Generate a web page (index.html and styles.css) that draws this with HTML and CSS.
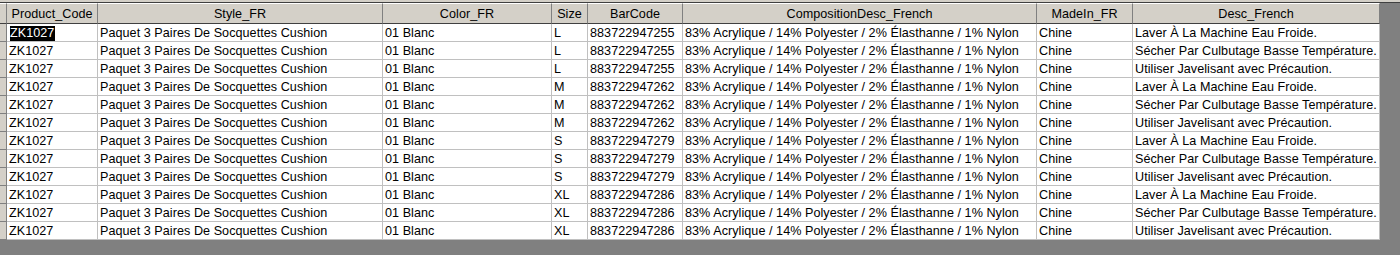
FILE: index.html
```html
<!DOCTYPE html>
<html>
<head>
<meta charset="utf-8">
<link rel="stylesheet" href="styles.css">
</head>
<body>
<div class="strip"></div>
<div class="area">
  <div class="sheet" id="sheet">
    <div class="hd sel"></div>
    <div class="hd">Product_Code</div>
    <div class="hd">Style_FR</div>
    <div class="hd">Color_FR</div>
    <div class="hd">Size</div>
    <div class="hd">BarCode</div>
    <div class="hd">CompositionDesc_French</div>
    <div class="hd">MadeIn_FR</div>
    <div class="hd">Desc_French</div>

    <div class="rs cur"></div><div class="c"><span class="hl">ZK1027</span></div><div class="c">Paquet 3 Paires De Socquettes Cushion</div><div class="c">01 Blanc</div><div class="c">L</div><div class="c">883722947255</div><div class="c">83% Acrylique / 14% Polyester / 2% Élasthanne / 1% Nylon</div><div class="c">Chine</div><div class="c">Laver À La Machine Eau Froide.</div>
    <div class="rs"></div><div class="c">ZK1027</div><div class="c">Paquet 3 Paires De Socquettes Cushion</div><div class="c">01 Blanc</div><div class="c">L</div><div class="c">883722947255</div><div class="c">83% Acrylique / 14% Polyester / 2% Élasthanne / 1% Nylon</div><div class="c">Chine</div><div class="c">Sécher Par Culbutage Basse Température.</div>
    <div class="rs"></div><div class="c">ZK1027</div><div class="c">Paquet 3 Paires De Socquettes Cushion</div><div class="c">01 Blanc</div><div class="c">L</div><div class="c">883722947255</div><div class="c">83% Acrylique / 14% Polyester / 2% Élasthanne / 1% Nylon</div><div class="c">Chine</div><div class="c">Utiliser Javelisant avec Précaution.</div>
    <div class="rs"></div><div class="c">ZK1027</div><div class="c">Paquet 3 Paires De Socquettes Cushion</div><div class="c">01 Blanc</div><div class="c">M</div><div class="c">883722947262</div><div class="c">83% Acrylique / 14% Polyester / 2% Élasthanne / 1% Nylon</div><div class="c">Chine</div><div class="c">Laver À La Machine Eau Froide.</div>
    <div class="rs"></div><div class="c">ZK1027</div><div class="c">Paquet 3 Paires De Socquettes Cushion</div><div class="c">01 Blanc</div><div class="c">M</div><div class="c">883722947262</div><div class="c">83% Acrylique / 14% Polyester / 2% Élasthanne / 1% Nylon</div><div class="c">Chine</div><div class="c">Sécher Par Culbutage Basse Température.</div>
    <div class="rs"></div><div class="c">ZK1027</div><div class="c">Paquet 3 Paires De Socquettes Cushion</div><div class="c">01 Blanc</div><div class="c">M</div><div class="c">883722947262</div><div class="c">83% Acrylique / 14% Polyester / 2% Élasthanne / 1% Nylon</div><div class="c">Chine</div><div class="c">Utiliser Javelisant avec Précaution.</div>
    <div class="rs"></div><div class="c">ZK1027</div><div class="c">Paquet 3 Paires De Socquettes Cushion</div><div class="c">01 Blanc</div><div class="c">S</div><div class="c">883722947279</div><div class="c">83% Acrylique / 14% Polyester / 2% Élasthanne / 1% Nylon</div><div class="c">Chine</div><div class="c">Laver À La Machine Eau Froide.</div>
    <div class="rs"></div><div class="c">ZK1027</div><div class="c">Paquet 3 Paires De Socquettes Cushion</div><div class="c">01 Blanc</div><div class="c">S</div><div class="c">883722947279</div><div class="c">83% Acrylique / 14% Polyester / 2% Élasthanne / 1% Nylon</div><div class="c">Chine</div><div class="c">Sécher Par Culbutage Basse Température.</div>
    <div class="rs"></div><div class="c">ZK1027</div><div class="c">Paquet 3 Paires De Socquettes Cushion</div><div class="c">01 Blanc</div><div class="c">S</div><div class="c">883722947279</div><div class="c">83% Acrylique / 14% Polyester / 2% Élasthanne / 1% Nylon</div><div class="c">Chine</div><div class="c">Utiliser Javelisant avec Précaution.</div>
    <div class="rs"></div><div class="c">ZK1027</div><div class="c">Paquet 3 Paires De Socquettes Cushion</div><div class="c">01 Blanc</div><div class="c">XL</div><div class="c">883722947286</div><div class="c">83% Acrylique / 14% Polyester / 2% Élasthanne / 1% Nylon</div><div class="c">Chine</div><div class="c">Laver À La Machine Eau Froide.</div>
    <div class="rs"></div><div class="c">ZK1027</div><div class="c">Paquet 3 Paires De Socquettes Cushion</div><div class="c">01 Blanc</div><div class="c">XL</div><div class="c">883722947286</div><div class="c">83% Acrylique / 14% Polyester / 2% Élasthanne / 1% Nylon</div><div class="c">Chine</div><div class="c">Sécher Par Culbutage Basse Température.</div>
    <div class="rs"></div><div class="c">ZK1027</div><div class="c">Paquet 3 Paires De Socquettes Cushion</div><div class="c">01 Blanc</div><div class="c">XL</div><div class="c">883722947286</div><div class="c">83% Acrylique / 14% Polyester / 2% Élasthanne / 1% Nylon</div><div class="c">Chine</div><div class="c">Utiliser Javelisant avec Précaution.</div>
  </div>
</div>
</body>
</html>
```

FILE: styles.css
```css
html, body {
  margin: 0;
  padding: 0;
  background: #808080;
  height: 255px;
  overflow: hidden;
}
.strip {
  height: 2px;
  background: #d4d0c8;
  border-bottom: 1px solid #404040;
}
.area {
  display: flex;
}
.sheet {
  display: grid;
  grid-template-columns: 7px 91px 285px 169px 36px 95px 354px 96px 247px;
  grid-auto-rows: 18px;
  grid-template-rows: 21px;
  background: #ffffff;
  font-family: "Liberation Sans", Arial, sans-serif;
  font-size: 12.6px;
  letter-spacing: 0.05px;
  color: #000;
}
.hd {
  box-sizing: border-box;
  background: #d4d0c8;
  border-top: 1px solid #ffffff;
  border-right: 1px solid #808080;
  border-bottom: 1px solid #404040;
  text-align: center;
  line-height: 19px;
  padding-top: 1px;
  white-space: nowrap;
  overflow: hidden;
}
.rs {
  box-sizing: border-box;
  background: #d4d0c8;
  border-right: 1px solid #808080;
  border-bottom: 1px solid #808080;
}
.c {
  box-sizing: border-box;
  border-right: 1px solid #c0c0c0;
  border-bottom: 1px solid #c0c0c0;
  padding-left: 2px;
  padding-top: 1px;
  line-height: 16px;
  white-space: nowrap;
}
.hl {
  background: #000;
  color: #fff;
  margin-left: 1px;
  display: inline-block;
  line-height: 15px;
  padding-right: 1px;
}
```
